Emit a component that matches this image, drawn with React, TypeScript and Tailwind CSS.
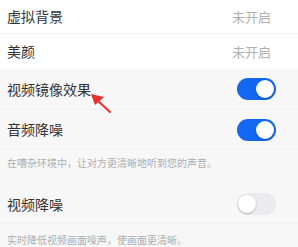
import React from 'react';

const font = { fontFamily: '"Noto Sans CJK SC", "Noto Sans", sans-serif' };

const Toggle = ({ on }: { on: boolean }) => (
  <div
    className={`relative h-[22px] w-[39px] rounded-full ${on ? 'bg-[#1268f3]' : 'bg-[#ebebed]'}`}
  >
    <div
      className={`absolute top-[2px] h-[18px] w-[18px] rounded-full bg-white shadow-[0_1px_2px_rgba(0,0,0,0.25)] ${
        on ? 'right-[2px]' : 'left-[1px]'
      }`}
    />
  </div>
);

const App = () => {
  return (
    <div className="relative h-[247px] w-[298px] overflow-hidden bg-[#f7f7f8]" style={font}>
      {/* top rows */}
      <div className="bg-white">
        <div className="flex h-[34px] items-center justify-between border-b border-[#f0f0f0] pl-[7px] pr-[27px]">
          <span className="text-[14px] text-[#333]">虚拟背景</span>
          <span className="text-[13px] text-[#b0b0b0]">未开启</span>
        </div>
        <div className="flex h-[35px] items-center justify-between pl-[7px] pr-[27px]">
          <span className="text-[14px] text-[#333]">美颜</span>
          <span className="text-[13px] text-[#b0b0b0]">未开启</span>
        </div>
      </div>

      {/* toggles */}
      <div className="flex h-[41px] items-center justify-between border-b border-[#f1f1f2] pl-[7px] pr-[22px]">
        <span className="text-[14px] text-[#333]">视频镜像效果</span>
        <Toggle on />
      </div>
      <div className="flex h-[40px] items-center justify-between border-b border-[#f1f1f2] pl-[7px] pr-[22px]">
        <span className="text-[14px] text-[#333]">音频降噪</span>
        <Toggle on />
      </div>
      <div className="h-[35px] pl-[7px] pt-[7px] text-[10px] leading-[12px] text-[#aeaeae]">
        在嘈杂环境中，让对方更清晰地听到您的声音。
      </div>
      <div className="flex h-[39px] items-center justify-between border-b border-[#f1f1f2] pl-[7px] pr-[22px]">
        <span className="text-[14px] text-[#333]">视频降噪</span>
        <Toggle on={false} />
      </div>
      <div className="pl-[7px] pt-[10px] text-[10px] leading-[12px] text-[#aeaeae]">
        实时降低视频画面噪声，使画面更清晰。
      </div>

      {/* red arrow annotation */}
      <svg className="absolute left-0 top-0" width="298" height="247" viewBox="0 0 298 247">
        <line x1="110" y1="112" x2="97" y2="100" stroke="#e8302c" strokeWidth="2" strokeLinecap="round" />
        <polygon points="91,94 104,97 95,105" fill="#e8302c" />
      </svg>
    </div>
  );
};

export default App;
